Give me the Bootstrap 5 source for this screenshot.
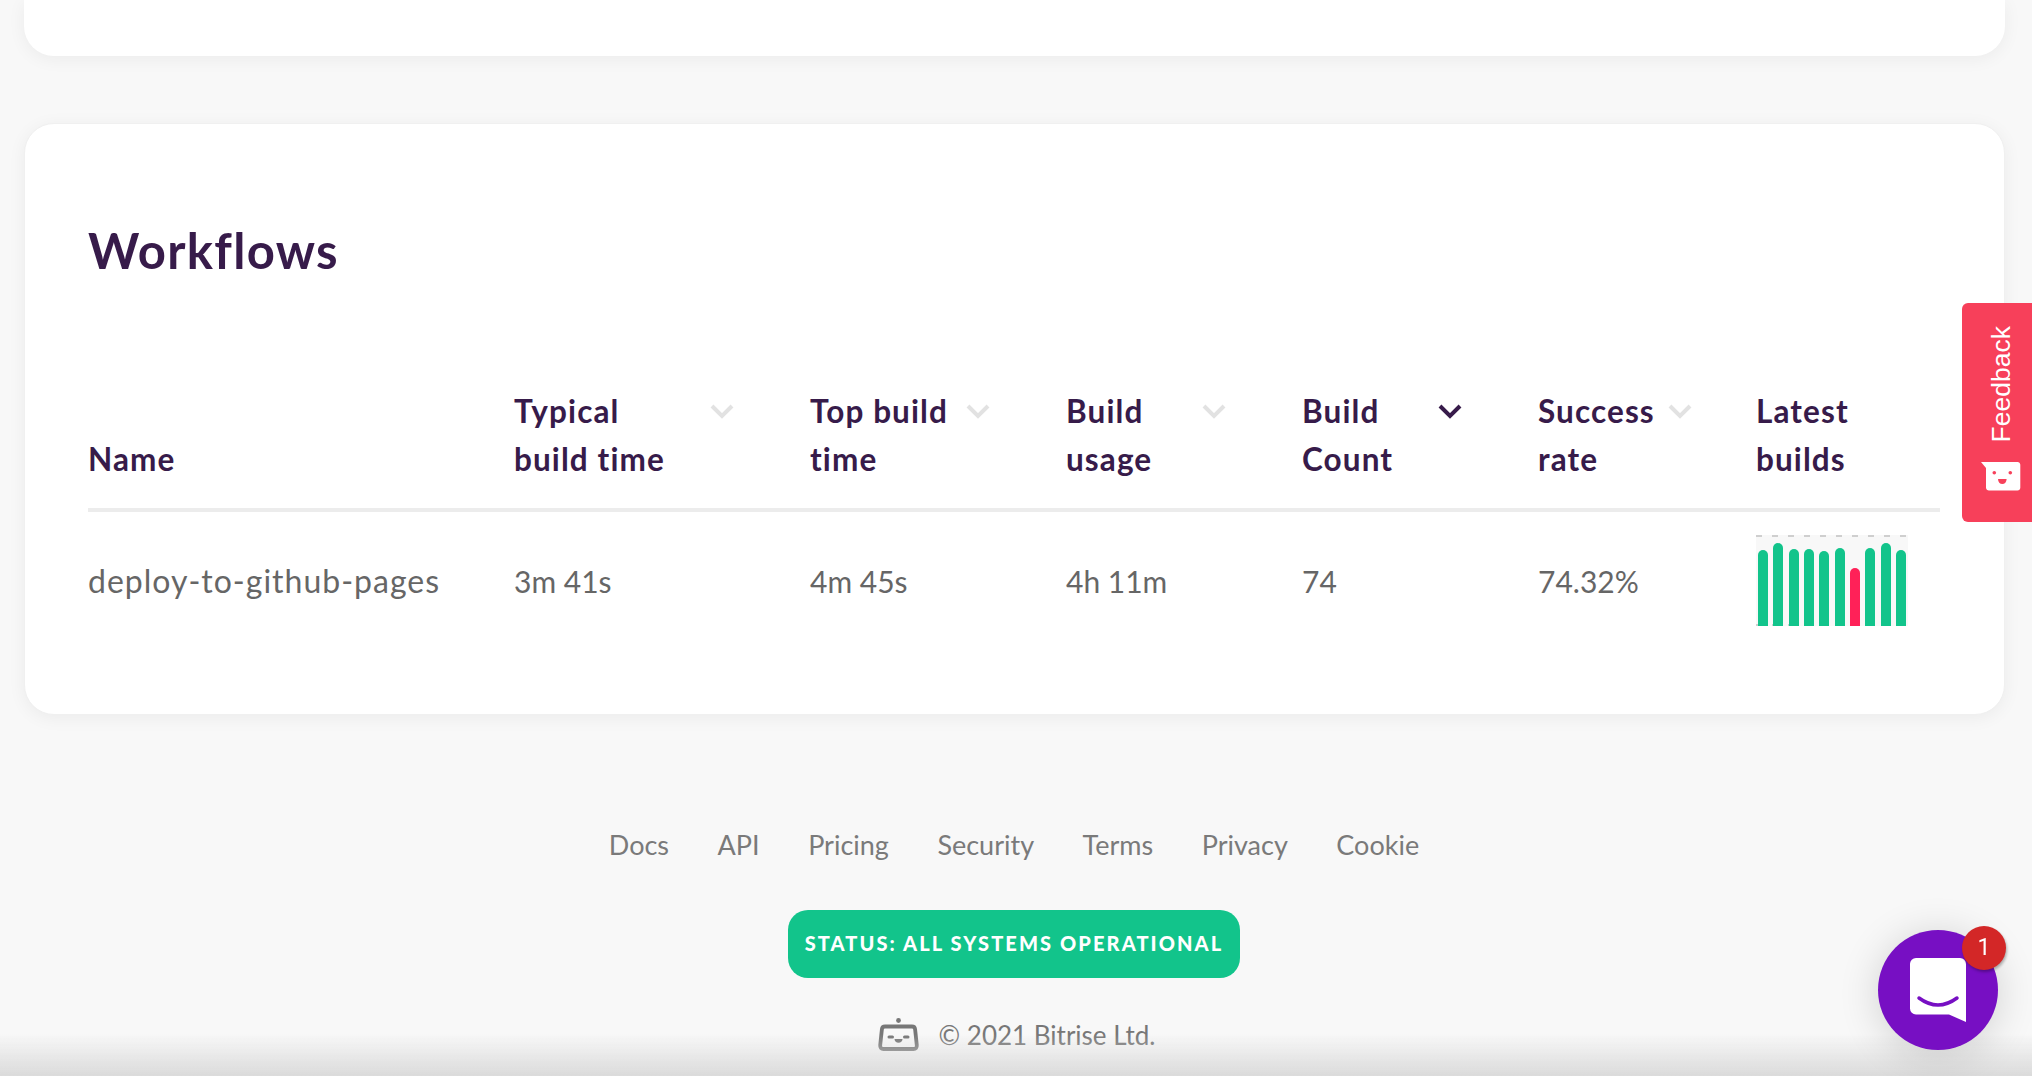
<!doctype html>
<html lang="en">

<head>
    <meta charset="utf-8">
    <meta name="viewport" content="width=device-width, initial-scale=1">
    <title>Workflows</title>
    <link href="https://cdn.jsdelivr.net/npm/bootstrap@5.3.3/dist/css/bootstrap.min.css" rel="stylesheet">
    <style>
        html,
        body {
            height: 1076px;
            overflow: hidden;
        }

        body {
            background-color: #f8f8f8;
            font-family: Lato, "Open Sans", sans-serif;
            padding: 0 27px 0 24px;
        }

        .panel-box {
            background: #fff;
            box-shadow: 0 3px 18px rgba(0, 0, 0, .055);
        }

        .panel-top {
            height: 56px;
            margin-bottom: 67px;
            border-radius: 0 0 30px 30px;
        }

        .panel-main {
            height: 592px;
            padding: 96px 65px 0 63px;
            border-radius: 30px;
            border: 1px solid #f0f0f0;
        }

        .panel-title {
            font-size: 49px;
            line-height: 60px;
            font-weight: 700;
            letter-spacing: 1.3px;
            color: #371b4a;
            margin: 0 0 107px;
        }

        .wf-table {
            table-layout: fixed;
            width: 1852px;
        }

        .wf-table>thead>tr>th {
            color: #371b4a;
            font-size: 31.5px;
            line-height: 48px;
            font-weight: 700;
            letter-spacing: 1.1px;
            padding: 0 76px 25px 0;
            border-bottom: 4px solid #ececec;
            vertical-align: bottom;
            background: transparent;
        }

        .wf-table>thead>tr>th:nth-child(1) { width: 426px; }
        .wf-table>thead>tr>th:nth-child(2) { width: 296px; }
        .wf-table>thead>tr>th:nth-child(3) { width: 256px; }
        .wf-table>thead>tr>th:nth-child(4) { width: 236px; }
        .wf-table>thead>tr>th:nth-child(5) { width: 236px; }
        .wf-table>thead>tr>th:nth-child(6) { width: 218px; padding-right: 64px; }
        .wf-table>thead>tr>th:nth-child(7) { padding-right: 0; }

        .wf-table>tbody>tr>td {
            color: #666;
            font-size: 30px;
            line-height: 40px;
            padding: 23px 0;
            vertical-align: middle;
            background: transparent;
        }

        .wf-table>tbody>tr>td.wf-name {
            font-size: 32px;
            letter-spacing: 1px;
        }

        .sort-mark {
            width: 24px;
            height: 15px;
            margin-top: 17px;
            flex: none;
            fill: none;
            stroke: #e2e2e2;
            stroke-width: 4;
        }

        .sort-mark.is-active {
            stroke: #371b4a;
        }

        .build-chart {
            width: 152px;
            height: 91px;
            padding: 0 2px;
            background-color: #f8f8f8;
            background-image: repeating-linear-gradient(90deg, #cfcfcf 0 6px, transparent 6px 16px),
                repeating-linear-gradient(90deg, #cfcfcf 0 6px, transparent 6px 16px);
            background-size: 100% 2px, 100% 2px;
            background-position: 0 0, 0 100%;
            background-repeat: no-repeat;
        }

        .build-bar {
            width: 10px;
            border-radius: 5px 5px 0 0;
            background: #12c48b;
        }

        .build-bar.is-failed {
            background: #ff2158;
        }

        .site-foot {
            margin-right: 1px;
        }

        .footer-links {
            margin: 110px 0 45px;
            gap: 48.5px;
            font-size: 27px;
            line-height: 40px;
            color: #7a7a7a;
        }

        .footer-links a {
            color: inherit;
            text-decoration: none;
        }

        .status-pill {
            width: 452px;
            height: 68px;
            padding-bottom: 2px;
            border-radius: 20px;
            background: #12c48b;
            color: #fff;
            font-size: 20px;
            font-weight: 900;
            letter-spacing: 2.1px;
            text-transform: uppercase;
            text-decoration: none;
        }

        .footer-copy {
            margin-top: 37px;
            margin-left: 5px;
            gap: 20px;
            font-size: 26px;
            line-height: 40px;
            color: #777;
        }

        .bottom-fade {
            position: fixed;
            left: 0;
            right: 0;
            bottom: 0;
            height: 42px;
            background: linear-gradient(rgba(215, 215, 215, 0), rgba(215, 215, 215, .9));
            pointer-events: none;
        }

        .feedback-tab {
            position: fixed;
            top: 303px;
            right: 0;
            width: 70px;
            height: 219px;
            padding: 23px 0 0 8px;
            gap: 20px;
            border-radius: 6px 0 0 6px;
            background: #f7405a;
            color: #fff;
            font-family: "Liberation Sans", Arial, sans-serif;
            font-size: 26.5px;
            line-height: 30px;
            text-decoration: none;
        }

        .feedback-text {
            writing-mode: vertical-rl;
            transform: rotate(180deg);
        }

        .chat-launcher {
            position: fixed;
            left: 1878px;
            top: 930px;
            width: 120px;
            height: 120px;
            border-radius: 50%;
            background: #770fc3;
            box-shadow: 0 4px 40px rgba(0, 0, 0, .16);
        }

        .chat-count {
            position: absolute;
            left: 84px;
            top: -4px;
            width: 44px;
            height: 44px;
            border-radius: 50%;
            background: #d32727;
            color: #fff;
            font-family: Roboto, sans-serif;
            font-size: 23px;
            box-shadow: 1px 2px 3px rgba(0, 0, 0, .3);
        }
    </style>
</head>

<body>

    <div class="panel-box panel-top"></div>

    <section class="panel-box panel-main">
        <h2 class="panel-title">Workflows</h2>
        <table class="table table-borderless mb-0 wf-table">
            <thead>
                <tr>
                    <th>Name</th>
                    <th>
                        <div class="d-flex justify-content-between">
                            <span>Typical<br>build time</span>
                            <svg class="sort-mark" viewBox="0 0 24 15"><path d="M2 2l10 10L22 2" /></svg>
                        </div>
                    </th>
                    <th>
                        <div class="d-flex justify-content-between">
                            <span>Top build<br>time</span>
                            <svg class="sort-mark" viewBox="0 0 24 15"><path d="M2 2l10 10L22 2" /></svg>
                        </div>
                    </th>
                    <th>
                        <div class="d-flex justify-content-between">
                            <span>Build<br>usage</span>
                            <svg class="sort-mark" viewBox="0 0 24 15"><path d="M2 2l10 10L22 2" /></svg>
                        </div>
                    </th>
                    <th>
                        <div class="d-flex justify-content-between">
                            <span>Build<br>Count</span>
                            <svg class="sort-mark is-active" viewBox="0 0 24 15"><path d="M2 2l10 10L22 2" /></svg>
                        </div>
                    </th>
                    <th>
                        <div class="d-flex justify-content-between">
                            <span>Success<br>rate</span>
                            <svg class="sort-mark" viewBox="0 0 24 15"><path d="M2 2l10 10L22 2" /></svg>
                        </div>
                    </th>
                    <th>Latest<br>builds</th>
                </tr>
            </thead>
            <tbody>
                <tr>
                    <td class="wf-name">deploy-to-github-pages</td>
                    <td>3m 41s</td>
                    <td>4m 45s</td>
                    <td>4h 11m</td>
                    <td>74</td>
                    <td>74.32%</td>
                    <td>
                        <div class="build-chart d-flex align-items-end justify-content-between">
                            <div class="build-bar" style="height: 76px"></div>
                            <div class="build-bar" style="height: 83px"></div>
                            <div class="build-bar" style="height: 77px"></div>
                            <div class="build-bar" style="height: 77px"></div>
                            <div class="build-bar" style="height: 75px"></div>
                            <div class="build-bar" style="height: 78px"></div>
                            <div class="build-bar is-failed" style="height: 58px"></div>
                            <div class="build-bar" style="height: 78px"></div>
                            <div class="build-bar" style="height: 83px"></div>
                            <div class="build-bar" style="height: 76px"></div>
                        </div>
                    </td>
                </tr>
            </tbody>
        </table>
    </section>

    <footer class="site-foot d-flex flex-column align-items-center">
        <nav class="footer-links d-flex">
            <a href="#">Docs</a>
            <a href="#">API</a>
            <a href="#">Pricing</a>
            <a href="#">Security</a>
            <a href="#">Terms</a>
            <a href="#">Privacy</a>
            <a href="#">Cookie</a>
        </nav>
        <a href="#" class="status-pill d-flex align-items-center justify-content-center">Status: all systems operational</a>
        <div class="footer-copy d-flex align-items-center">
            <svg width="41" height="34" viewBox="0 0 41 34">
                <circle cx="20.500" cy="2.500" r="2.400" fill="#777" />
                <path d="M7 8.500h27c1.800 0 2.900 1 3.100 2.700l1.700 16c.2 2.300-1 3.800-3.300 3.800H5.500c-2.300 0-3.500-1.500-3.300-3.800l1.700-16C4.100 9.500 5.200 8.500 7 8.500z" fill="none" stroke="#777" stroke-width="3.800" />
                <path d="M11 19h3.500M26.500 19H30" stroke="#777" stroke-width="3" stroke-linecap="round" />
                <path d="M16.500 21h8c0 2.400-1.800 3.800-4 3.800s-4-1.400-4-3.800z" fill="#777" />
            </svg>
            <span>© 2021 Bitrise Ltd.</span>
        </div>
    </footer>

    <div class="bottom-fade"></div>

    <a href="#" class="feedback-tab d-flex flex-column align-items-center">
        <span class="feedback-text">Feedback</span>
        <svg width="40" height="29" viewBox="0 0 40 29">
            <path d="M0 0h36.500c1.600 0 2.800 1.200 2.800 2.800v23c0 1.600-1.200 2.800-2.800 2.800H8c-1.600 0-3-1.200-3-2.800V6z" fill="#fff" />
            <circle cx="13.300" cy="10.700" r="1.800" fill="#f7405a" />
            <circle cx="29.300" cy="10.700" r="1.800" fill="#f7405a" />
            <path d="M17 17h8.600c0 3-1.900 5-4.300 5s-4.300-2-4.300-5z" fill="#f7405a" />
        </svg>
    </a>

    <div class="chat-launcher">
        <svg width="120" height="120" viewBox="0 0 120 120">
            <path d="M38 28h44a6 6 0 0 1 6 6v58L71 84.500H38a6 6 0 0 1-6-6V34a6 6 0 0 1 6-6z" fill="#fff" />
            <path d="M41 68q19 14 38 0" fill="none" stroke="#770fc3" stroke-width="3.500" stroke-linecap="round" />
        </svg>
        <span class="chat-count d-flex align-items-center justify-content-center">1</span>
    </div>

    <script src="https://cdn.jsdelivr.net/npm/bootstrap@5.3.3/dist/js/bootstrap.bundle.min.js"></script>

</body>

</html>
